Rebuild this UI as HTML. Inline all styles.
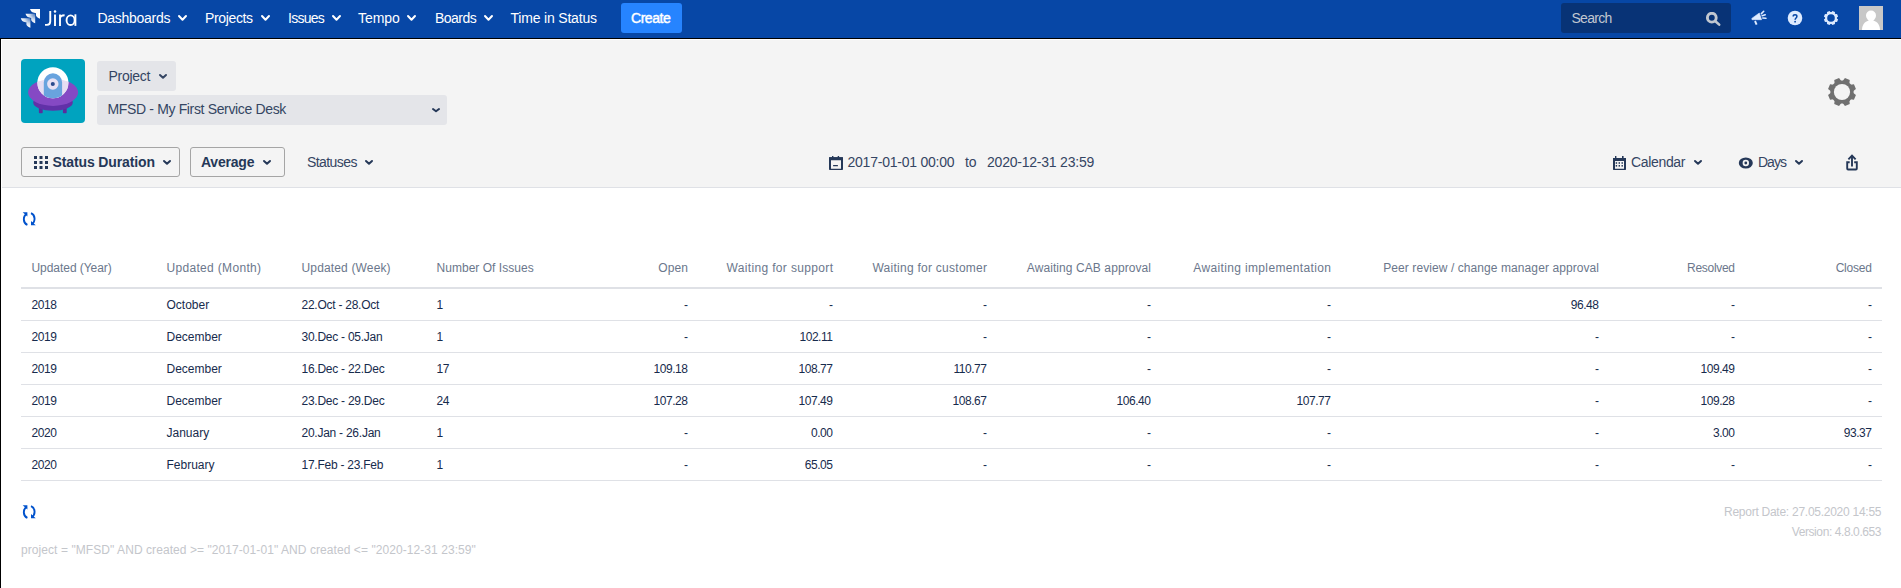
<!DOCTYPE html>
<html><head><meta charset="utf-8">
<style>
html,body{margin:0;padding:0;}
body{width:1901px;height:588px;overflow:hidden;position:relative;background:#fff;font-family:"Liberation Sans",sans-serif;}
.a{position:absolute;white-space:nowrap;}
</style></head><body>
<div class="a" style="left:0;top:0;width:1901px;height:38px;background:#0747A6;"></div>
<svg class="a" style="left:18px;top:6px" width="26" height="24" viewBox="0 0 26 24">
  <defs>
   <radialGradient id="lg1" gradientUnits="userSpaceOnUse" cx="17" cy="8" r="9"><stop offset="0" stop-color="#fff" stop-opacity="0.25"/><stop offset="0.6" stop-color="#fff" stop-opacity="0.8"/><stop offset="1" stop-color="#fff" stop-opacity="1"/></radialGradient>
   <radialGradient id="lg2" gradientUnits="userSpaceOnUse" cx="12.3" cy="12.2" r="9"><stop offset="0" stop-color="#fff" stop-opacity="0.25"/><stop offset="0.6" stop-color="#fff" stop-opacity="0.8"/><stop offset="1" stop-color="#fff" stop-opacity="1"/></radialGradient>
  </defs>
  <path d="M12 3.1 L22 3.1 L22 12.8 C20.6 12.3 18.2 11 18 9.5 L18 7.2 C15.5 7 13 6.3 12 3.1 Z" fill="#fff"/>
  <path d="M7.5 7.8 L17.2 7.8 L17.2 17.2 C15.8 16.7 13.4 15.4 13.2 13.9 L13.2 11.9 C10.9 11.7 8.5 11 7.5 7.8 Z" fill="url(#lg1)"/>
  <path d="M2.8 12.2 L12.4 12.2 L12.4 21.7 C11 21.2 8.6 19.9 8.4 18.4 L8.4 16.3 C6.1 16.1 3.8 15.4 2.8 12.2 Z" fill="url(#lg2)"/>
</svg>
<svg class="a" style="left:40px;top:6px" width="40" height="24" viewBox="40 6 40 24">
 <g stroke="#fff" stroke-width="1.9" fill="none">
  <path d="M50.25 10.9 L50.25 21.6 Q50.25 24.85 47 24.85 L45 24.85"/>
  <path d="M55 14.4 L55 25.9"/>
  <path d="M60 14.4 L60 25.9 M60 18.4 Q60.3 15.3 64.6 15.3"/>
  <ellipse cx="70.6" cy="20.2" rx="4.05" ry="4.85"/>
  <path d="M75.4 14.3 L75.4 25.9"/>
 </g>
 <circle cx="55" cy="11.5" r="1.25" fill="#fff"/>
</svg>
<div class="a" style="left:97.5px;top:10.0px;font-size:14px;line-height:16px;color:#fff;letter-spacing:-0.28px;">Dashboards</div>
<svg class="a" style="left:176px;top:13px" width="13" height="10" viewBox="0 0 13 10"><path d="M3.0 3.0 L6.5 6.8 L10.0 3.0" stroke="#fff" stroke-width="2" fill="none" stroke-linecap="round" stroke-linejoin="round"/></svg>
<div class="a" style="left:205px;top:10.0px;font-size:14px;line-height:16px;color:#fff;letter-spacing:-0.36px;">Projects</div>
<svg class="a" style="left:259px;top:13px" width="13" height="10" viewBox="0 0 13 10"><path d="M3.0 3.0 L6.5 6.8 L10.0 3.0" stroke="#fff" stroke-width="2" fill="none" stroke-linecap="round" stroke-linejoin="round"/></svg>
<div class="a" style="left:288px;top:10.0px;font-size:14px;line-height:16px;color:#fff;letter-spacing:-0.74px;">Issues</div>
<svg class="a" style="left:330px;top:13px" width="13" height="10" viewBox="0 0 13 10"><path d="M3.0 3.0 L6.5 6.8 L10.0 3.0" stroke="#fff" stroke-width="2" fill="none" stroke-linecap="round" stroke-linejoin="round"/></svg>
<div class="a" style="left:358px;top:10.0px;font-size:14px;line-height:16px;color:#fff;letter-spacing:-0.08px;">Tempo</div>
<svg class="a" style="left:405px;top:13px" width="13" height="10" viewBox="0 0 13 10"><path d="M3.0 3.0 L6.5 6.8 L10.0 3.0" stroke="#fff" stroke-width="2" fill="none" stroke-linecap="round" stroke-linejoin="round"/></svg>
<div class="a" style="left:435px;top:10.0px;font-size:14px;line-height:16px;color:#fff;letter-spacing:-0.54px;">Boards</div>
<svg class="a" style="left:482px;top:13px" width="13" height="10" viewBox="0 0 13 10"><path d="M3.0 3.0 L6.5 6.8 L10.0 3.0" stroke="#fff" stroke-width="2" fill="none" stroke-linecap="round" stroke-linejoin="round"/></svg>
<div class="a" style="left:510.5px;top:10.0px;font-size:14px;line-height:16px;color:#fff;letter-spacing:-0.19px;">Time in Status</div>
<div class="a" style="left:621px;top:3px;width:61px;height:30px;background:#2684FF;border-radius:3px;"></div>
<div class="a" style="left:631px;top:10.0px;font-size:14px;line-height:16px;color:#fff;letter-spacing:-0.45px;-webkit-text-stroke:0.45px #fff;">Create</div>
<div class="a" style="left:1561px;top:3px;width:170px;height:30px;background:#083376;border-radius:3px;"></div>
<div class="a" style="left:1571.5px;top:10.0px;font-size:14px;line-height:16px;color:#C1C7D0;letter-spacing:-0.72px;">Search</div>
<svg class="a" style="left:1705px;top:12px" width="17" height="15" viewBox="0 0 17 15"><circle cx="6.8" cy="5.7" r="4.4" stroke="#C1C7D0" stroke-width="2.9" fill="none"/><path d="M10.4 9.2 L14.2 12.6" stroke="#C1C7D0" stroke-width="2.6" stroke-linecap="round"/></svg>
<svg class="a" style="left:1750px;top:10px" width="18" height="16" viewBox="0 0 18 16">
  <path d="M1.8 8.4 L9.3 3 L11.6 9.7 L2 9.7 Z" fill="#DEEBFF" stroke="#DEEBFF" stroke-width="0.6" stroke-linejoin="round"/>
  <path d="M5 11 L6.6 14.7" stroke="#DEEBFF" stroke-width="1.9" stroke-linecap="butt"/>
  <path d="M11.4 3.6 L13.7 1.3 M12.2 5.7 L15.2 4.8 M12.8 8 L15.9 8.3" stroke="#DEEBFF" stroke-width="1.6" stroke-linecap="round"/>
</svg>
<svg class="a" style="left:1787px;top:10px" width="16" height="16" viewBox="0 0 16 16">
  <circle cx="8" cy="8" r="7.3" fill="#DEEBFF"/>
  <path d="M6.2 6.4 C6.2 4.2 9.9 4.2 9.9 6.4 C9.9 8 8.1 8 8.1 9.8" stroke="#0747A6" stroke-width="1.5" fill="none"/>
  <circle cx="8.1" cy="11.7" r="0.9" fill="#0747A6"/>
</svg>
<svg class="a" style="left:1823px;top:10px" width="16" height="16" viewBox="0 0 16 16">
  <circle cx="8" cy="8" r="5.9" fill="#DEEBFF"/>
  <path d="M8.23 2.47 L9.42 0.90 L12.01 1.98 L11.75 3.92 L12.08 4.25 L14.02 3.99 L15.10 6.58 L13.53 7.77 L13.53 8.23 L15.10 9.42 L14.02 12.01 L12.08 11.75 L11.75 12.08 L12.01 14.02 L9.42 15.10 L8.23 13.53 L7.77 13.53 L6.58 15.10 L3.99 14.02 L4.25 12.08 L3.92 11.75 L1.98 12.01 L0.90 9.42 L2.47 8.23 L2.47 7.77 L0.90 6.58 L1.98 3.99 L3.92 4.25 L4.25 3.92 L3.99 1.98 L6.58 0.90 L7.77 2.47 Z" fill="#DEEBFF"/>
  <circle cx="8" cy="8" r="3.8" fill="#0747A6"/>
</svg>
<div class="a" style="left:1859px;top:6px;width:24px;height:24px;background:#C8C8C8;overflow:hidden;">
  <svg width="24" height="24" viewBox="0 0 24 24"><circle cx="12" cy="9.6" r="5" fill="#fff"/><path d="M3 24 C3 18 7 14.3 12 14.3 C17 14.3 21 18 21 24 Z" fill="#fff"/><rect x="9.5" y="13" width="5" height="3" fill="#fff"/></svg>
</div>
<div class="a" style="left:0;top:38px;width:1901px;height:1px;background:#000;"></div>
<div class="a" style="left:1px;top:39px;width:1900px;height:1px;background:#fff;"></div>
<div class="a" style="left:0;top:38px;width:1px;height:550px;background:#000;"></div>
<div class="a" style="left:1px;top:39px;width:1px;height:549px;background:#fff;"></div>
<div class="a" style="left:2px;top:40px;width:1899px;height:147px;background:#F4F4F4;border-bottom:1px solid #DFE1E6;"></div>
<div class="a" style="left:21px;top:59px;width:64px;height:64px;background:#00A3BF;border-radius:4px;overflow:hidden;">
<svg width="64" height="64" viewBox="0 0 64 64">
  <defs><clipPath id="sc"><ellipse cx="32.1" cy="33.4" rx="25" ry="13.5"/></clipPath><clipPath id="dc"><circle cx="31.9" cy="23.7" r="15.5"/></clipPath></defs>
  <rect x="17.9" y="45" width="3.8" height="9.3" rx="0.8" fill="#5A2D9E"/>
  <rect x="41.9" y="45" width="3.8" height="9.3" rx="0.8" fill="#5A2D9E"/>
  <ellipse cx="32" cy="43.6" rx="19.8" ry="8.2" fill="#6131A8"/>
  <ellipse cx="32.1" cy="33.4" rx="25" ry="13.5" fill="#8549C4"/>
  <circle cx="31.9" cy="23.7" r="15.5" fill="#fff"/>
  <circle cx="31.9" cy="23.7" r="15.5" fill="#E6DDF2" clip-path="url(#sc)"/>
  <path d="M22.8 45 L22.8 23.4 A9.15 9.15 0 0 1 41.1 23.4 L41.1 45 Z" fill="#69A3DE" clip-path="url(#dc)"/>
  <circle cx="31.8" cy="25" r="5.7" fill="#E8E1F4"/>
  <circle cx="31.8" cy="25" r="2.05" fill="#2B4B8E"/>
</svg>
</div>
<div class="a" style="left:97px;top:61px;width:79px;height:30px;background:#E4E5E9;border-radius:3px;"></div>
<div class="a" style="left:108.5px;top:68.0px;font-size:14px;line-height:16px;color:#344563;letter-spacing:-0.3px;">Project</div>
<svg class="a" style="left:157px;top:71.5px" width="12" height="9" viewBox="0 0 12 9"><path d="M3.0 3.0 L6.0 5.8 L9.0 3.0" stroke="#344563" stroke-width="2" fill="none" stroke-linecap="round" stroke-linejoin="round"/></svg>
<div class="a" style="left:97px;top:95px;width:350px;height:30px;background:#E4E5E9;border-radius:3px;"></div>
<div class="a" style="left:107.5px;top:101.0px;font-size:14px;line-height:16px;color:#344563;letter-spacing:-0.35px;">MFSD - My First Service Desk</div>
<svg class="a" style="left:430px;top:105.5px" width="12" height="8.5" viewBox="0 0 12 8.5"><path d="M3.0 3.0 L6.0 5.3 L9.0 3.0" stroke="#253858" stroke-width="2" fill="none" stroke-linecap="round" stroke-linejoin="round"/></svg>
<svg class="a" style="left:1826px;top:76px" width="32" height="32" viewBox="0 0 32 32">
  <circle cx="16" cy="16" r="11.6" fill="#707070"/>
  <path d="M16.69 4.92 L18.96 2.07 L23.76 4.06 L23.34 7.68 L24.32 8.66 L27.94 8.24 L29.93 13.04 L27.08 15.31 L27.08 16.69 L29.93 18.96 L27.94 23.76 L24.32 23.34 L23.34 24.32 L23.76 27.94 L18.96 29.93 L16.69 27.08 L15.31 27.08 L13.04 29.93 L8.24 27.94 L8.66 24.32 L7.68 23.34 L4.06 23.76 L2.07 18.96 L4.92 16.69 L4.92 15.31 L2.07 13.04 L4.06 8.24 L7.68 8.66 L8.66 7.68 L8.24 4.06 L13.04 2.07 L15.31 4.92 Z" fill="#707070"/>
  <circle cx="16" cy="16" r="8.1" fill="#F4F4F4"/>
</svg>
<div class="a" style="left:21px;top:147px;width:159px;height:30px;box-sizing:border-box;border:1px solid #A5A5A5;border-radius:3px;"></div>
<svg class="a" style="left:34px;top:156px" width="14" height="13" viewBox="0 0 14 13">
  <g fill="#253858">
  <rect x="0" y="0" width="3" height="3"/><rect x="5.5" y="0" width="3" height="3"/><rect x="11" y="0" width="3" height="3"/>
  <rect x="0" y="5" width="3" height="3"/><rect x="5.5" y="5" width="3" height="3"/><rect x="11" y="5" width="3" height="3"/>
  <rect x="0" y="10" width="3" height="3"/><rect x="5.5" y="10" width="3" height="3"/><rect x="11" y="10" width="3" height="3"/>
  </g>
</svg>
<div class="a" style="left:52.5px;top:154.0px;font-size:14px;line-height:16px;color:#253858;font-weight:bold;letter-spacing:-0.12px;">Status Duration</div>
<svg class="a" style="left:161px;top:157.5px" width="12" height="9" viewBox="0 0 12 9"><path d="M3.0 3.0 L6.0 5.8 L9.0 3.0" stroke="#253858" stroke-width="2" fill="none" stroke-linecap="round" stroke-linejoin="round"/></svg>
<div class="a" style="left:190px;top:147px;width:95px;height:30px;box-sizing:border-box;border:1px solid #A5A5A5;border-radius:3px;"></div>
<div class="a" style="left:201px;top:154.0px;font-size:14px;line-height:16px;color:#253858;font-weight:bold;letter-spacing:-0.22px;">Average</div>
<svg class="a" style="left:260.5px;top:157.5px" width="12" height="9" viewBox="0 0 12 9"><path d="M3.0 3.0 L6.0 5.8 L9.0 3.0" stroke="#253858" stroke-width="2" fill="none" stroke-linecap="round" stroke-linejoin="round"/></svg>
<div class="a" style="left:307px;top:154.0px;font-size:14px;line-height:16px;color:#344563;letter-spacing:-0.57px;">Statuses</div>
<svg class="a" style="left:363px;top:157.5px" width="12" height="9" viewBox="0 0 12 9"><path d="M3.0 3.0 L6.0 5.8 L9.0 3.0" stroke="#253858" stroke-width="2" fill="none" stroke-linecap="round" stroke-linejoin="round"/></svg>
<svg class="a" style="left:829px;top:156px" width="14" height="14" viewBox="0 0 14 14">
  <path d="M1 2.2 L13 2.2 L13 12.4 Q13 13.7 11.7 13.7 L2.3 13.7 Q1 13.7 1 12.4 Z" stroke="#253858" stroke-width="2" fill="none"/>
  <rect x="0" y="1.2" width="14" height="3" rx="0.8" fill="#253858"/>
  <rect x="3" y="0" width="1.4" height="2" fill="#253858"/><rect x="8.7" y="0" width="1.4" height="2" fill="#253858"/>
  <rect x="4" y="9" width="5" height="1.3" rx="0.6" fill="#253858"/>
</svg>
<div class="a" style="left:847.5px;top:154.0px;font-size:14px;line-height:16px;color:#344563;letter-spacing:-0.23px;">2017-01-01 00:00</div>
<div class="a" style="left:965px;top:154.0px;font-size:14px;line-height:16px;color:#344563;letter-spacing:-0.2px;">to</div>
<div class="a" style="left:987px;top:154.0px;font-size:14px;line-height:16px;color:#344563;letter-spacing:-0.22px;">2020-12-31 23:59</div>
<svg class="a" style="left:1613px;top:156px" width="14" height="14" viewBox="0 0 14 14">
  <path d="M1 3 L12 3 L12 12.7 Q12 13.7 11 13.7 L2 13.7 Q1 13.7 1 12.7 Z" stroke="#253858" stroke-width="2" fill="none"/>
  <rect x="0" y="2" width="13" height="3" rx="0.8" fill="#253858"/>
  <rect x="2" y="0" width="1.4" height="2.2" fill="#253858"/><rect x="9" y="0" width="1.6" height="2.2" fill="#253858"/>
  <g fill="#253858"><rect x="2.7" y="6.2" width="1.4" height="1.6"/><rect x="5.6" y="6.2" width="1.4" height="1.6"/><rect x="8.5" y="6.2" width="1.4" height="1.6"/>
  <rect x="2.7" y="9" width="1.4" height="1.6"/><rect x="5.6" y="9" width="1.4" height="1.6"/><rect x="8.5" y="9" width="1.4" height="1.6"/></g>
</svg>
<div class="a" style="left:1631px;top:154.0px;font-size:14px;line-height:16px;color:#344563;letter-spacing:-0.34px;">Calendar</div>
<svg class="a" style="left:1692px;top:158px" width="12" height="9" viewBox="0 0 12 9"><path d="M3.0 3.0 L6.0 5.8 L9.0 3.0" stroke="#253858" stroke-width="2" fill="none" stroke-linecap="round" stroke-linejoin="round"/></svg>
<svg class="a" style="left:1738px;top:156px" width="16" height="14" viewBox="0 0 16 14">
  <ellipse cx="7.8" cy="7" rx="7" ry="5.6" fill="#253858"/>
  <circle cx="7.8" cy="7" r="3.2" fill="#F4F4F4"/><circle cx="7.8" cy="7" r="1.4" fill="#253858"/>
</svg>
<div class="a" style="left:1758px;top:154.0px;font-size:14px;line-height:16px;color:#344563;letter-spacing:-1.0px;">Days</div>
<svg class="a" style="left:1793px;top:158px" width="12" height="9" viewBox="0 0 12 9"><path d="M3.0 3.0 L6.0 5.8 L9.0 3.0" stroke="#253858" stroke-width="2" fill="none" stroke-linecap="round" stroke-linejoin="round"/></svg>
<svg class="a" style="left:1845px;top:154px" width="14" height="17" viewBox="0 0 14 17">
  <path d="M7 2.2 L7 12.6" stroke="#253858" stroke-width="1.9"/>
  <path d="M3.4 5.3 L7 1.6 L10.6 5.3" stroke="#253858" stroke-width="1.9" fill="none"/>
  <path d="M4.7 8.2 L2.2 8.2 L2.2 14.6 Q2.2 15.5 3.1 15.5 L10.9 15.5 Q11.8 15.5 11.8 14.6 L11.8 8.2 L9.2 8.2" stroke="#253858" stroke-width="1.9" fill="none"/>
</svg>
<svg class="a" style="left:22px;top:212px" width="15" height="15" viewBox="0 0 15 15"><g stroke="#0052CC" stroke-width="1.9" fill="none"><path d="M4.8 1.8 A5.2 6 0 0 0 5.4 12.9"/><path d="M9 1.1 A5.2 6 0 0 1 9.6 12.2"/></g><path d="M0.7 0.3 L5.4 0.3 L5.4 4.6 Z" fill="#0052CC"/><path d="M9 9 L9 13.3 L13.7 13.3 Z" fill="#0052CC"/></svg>
<div class="a" style="left:31.5px;top:261.0px;font-size:12px;line-height:14px;color:#6B778C;letter-spacing:-0.05px;">Updated (Year)</div>
<div class="a" style="left:166.5px;top:261.0px;font-size:12px;line-height:14px;color:#6B778C;letter-spacing:0.32px;">Updated (Month)</div>
<div class="a" style="left:301.5px;top:261.0px;font-size:12px;line-height:14px;color:#6B778C;letter-spacing:0.15px;">Updated (Week)</div>
<div class="a" style="left:436.5px;top:261.0px;font-size:12px;line-height:14px;color:#6B778C;letter-spacing:0.03px;">Number Of Issues</div>
<div class="a" style="right:1212.9px;top:261.0px;font-size:12px;line-height:14px;color:#6B778C;letter-spacing:0.1px;">Open</div>
<div class="a" style="right:1067.65px;top:261.0px;font-size:12px;line-height:14px;color:#6B778C;letter-spacing:0.35px;">Waiting for support</div>
<div class="a" style="right:913.74px;top:261.0px;font-size:12px;line-height:14px;color:#6B778C;letter-spacing:0.26px;">Waiting for customer</div>
<div class="a" style="right:749.915px;top:261.0px;font-size:12px;line-height:14px;color:#6B778C;letter-spacing:0.085px;">Awaiting CAB approval</div>
<div class="a" style="right:569.64px;top:261.0px;font-size:12px;line-height:14px;color:#6B778C;letter-spacing:0.36px;">Awaiting implementation</div>
<div class="a" style="right:301.917px;top:261.0px;font-size:12px;line-height:14px;color:#6B778C;letter-spacing:0.083px;">Peer review / change manager approval</div>
<div class="a" style="right:166.3px;top:261.0px;font-size:12px;line-height:14px;color:#6B778C;letter-spacing:-0.3px;">Resolved</div>
<div class="a" style="right:29.2px;top:261.0px;font-size:12px;line-height:14px;color:#6B778C;letter-spacing:-0.2px;">Closed</div>
<div class="a" style="left:21px;top:287px;width:1861px;height:2px;background:#DFE1E6;"></div>
<div class="a" style="left:31.5px;top:298.0px;font-size:12px;line-height:14px;color:#172B4D;letter-spacing:-0.45px;">2018</div>
<div class="a" style="left:166.5px;top:298.0px;font-size:12px;line-height:14px;color:#172B4D;letter-spacing:0px;">October</div>
<div class="a" style="left:301.5px;top:298.0px;font-size:12px;line-height:14px;color:#172B4D;letter-spacing:-0.25px;">22.Oct - 28.Oct</div>
<div class="a" style="left:436.5px;top:298.0px;font-size:12px;line-height:14px;color:#172B4D;letter-spacing:-0.45px;">1</div>
<div class="a" style="right:1213px;top:298.0px;font-size:12px;line-height:14px;color:#172B4D;letter-spacing:0px;">-</div>
<div class="a" style="right:1068px;top:298.0px;font-size:12px;line-height:14px;color:#172B4D;letter-spacing:0px;">-</div>
<div class="a" style="right:914px;top:298.0px;font-size:12px;line-height:14px;color:#172B4D;letter-spacing:0px;">-</div>
<div class="a" style="right:750px;top:298.0px;font-size:12px;line-height:14px;color:#172B4D;letter-spacing:0px;">-</div>
<div class="a" style="right:570px;top:298.0px;font-size:12px;line-height:14px;color:#172B4D;letter-spacing:0px;">-</div>
<div class="a" style="right:302.45px;top:298.0px;font-size:12px;line-height:14px;color:#172B4D;letter-spacing:-0.45px;">96.48</div>
<div class="a" style="right:166px;top:298.0px;font-size:12px;line-height:14px;color:#172B4D;letter-spacing:0px;">-</div>
<div class="a" style="right:29px;top:298.0px;font-size:12px;line-height:14px;color:#172B4D;letter-spacing:0px;">-</div>
<div class="a" style="left:21px;top:320px;width:1861px;height:1px;background:#DFE1E6;"></div>
<div class="a" style="left:31.5px;top:330.0px;font-size:12px;line-height:14px;color:#172B4D;letter-spacing:-0.45px;">2019</div>
<div class="a" style="left:166.5px;top:330.0px;font-size:12px;line-height:14px;color:#172B4D;letter-spacing:0px;">December</div>
<div class="a" style="left:301.5px;top:330.0px;font-size:12px;line-height:14px;color:#172B4D;letter-spacing:-0.25px;">30.Dec - 05.Jan</div>
<div class="a" style="left:436.5px;top:330.0px;font-size:12px;line-height:14px;color:#172B4D;letter-spacing:-0.45px;">1</div>
<div class="a" style="right:1213px;top:330.0px;font-size:12px;line-height:14px;color:#172B4D;letter-spacing:0px;">-</div>
<div class="a" style="right:1068.45px;top:330.0px;font-size:12px;line-height:14px;color:#172B4D;letter-spacing:-0.45px;">102.11</div>
<div class="a" style="right:914px;top:330.0px;font-size:12px;line-height:14px;color:#172B4D;letter-spacing:0px;">-</div>
<div class="a" style="right:750px;top:330.0px;font-size:12px;line-height:14px;color:#172B4D;letter-spacing:0px;">-</div>
<div class="a" style="right:570px;top:330.0px;font-size:12px;line-height:14px;color:#172B4D;letter-spacing:0px;">-</div>
<div class="a" style="right:302px;top:330.0px;font-size:12px;line-height:14px;color:#172B4D;letter-spacing:0px;">-</div>
<div class="a" style="right:166px;top:330.0px;font-size:12px;line-height:14px;color:#172B4D;letter-spacing:0px;">-</div>
<div class="a" style="right:29px;top:330.0px;font-size:12px;line-height:14px;color:#172B4D;letter-spacing:0px;">-</div>
<div class="a" style="left:21px;top:352px;width:1861px;height:1px;background:#DFE1E6;"></div>
<div class="a" style="left:31.5px;top:362.0px;font-size:12px;line-height:14px;color:#172B4D;letter-spacing:-0.45px;">2019</div>
<div class="a" style="left:166.5px;top:362.0px;font-size:12px;line-height:14px;color:#172B4D;letter-spacing:0px;">December</div>
<div class="a" style="left:301.5px;top:362.0px;font-size:12px;line-height:14px;color:#172B4D;letter-spacing:-0.25px;">16.Dec - 22.Dec</div>
<div class="a" style="left:436.5px;top:362.0px;font-size:12px;line-height:14px;color:#172B4D;letter-spacing:-0.45px;">17</div>
<div class="a" style="right:1213.45px;top:362.0px;font-size:12px;line-height:14px;color:#172B4D;letter-spacing:-0.45px;">109.18</div>
<div class="a" style="right:1068.45px;top:362.0px;font-size:12px;line-height:14px;color:#172B4D;letter-spacing:-0.45px;">108.77</div>
<div class="a" style="right:914.45px;top:362.0px;font-size:12px;line-height:14px;color:#172B4D;letter-spacing:-0.45px;">110.77</div>
<div class="a" style="right:750px;top:362.0px;font-size:12px;line-height:14px;color:#172B4D;letter-spacing:0px;">-</div>
<div class="a" style="right:570px;top:362.0px;font-size:12px;line-height:14px;color:#172B4D;letter-spacing:0px;">-</div>
<div class="a" style="right:302px;top:362.0px;font-size:12px;line-height:14px;color:#172B4D;letter-spacing:0px;">-</div>
<div class="a" style="right:166.45px;top:362.0px;font-size:12px;line-height:14px;color:#172B4D;letter-spacing:-0.45px;">109.49</div>
<div class="a" style="right:29px;top:362.0px;font-size:12px;line-height:14px;color:#172B4D;letter-spacing:0px;">-</div>
<div class="a" style="left:21px;top:384px;width:1861px;height:1px;background:#DFE1E6;"></div>
<div class="a" style="left:31.5px;top:394.0px;font-size:12px;line-height:14px;color:#172B4D;letter-spacing:-0.45px;">2019</div>
<div class="a" style="left:166.5px;top:394.0px;font-size:12px;line-height:14px;color:#172B4D;letter-spacing:0px;">December</div>
<div class="a" style="left:301.5px;top:394.0px;font-size:12px;line-height:14px;color:#172B4D;letter-spacing:-0.25px;">23.Dec - 29.Dec</div>
<div class="a" style="left:436.5px;top:394.0px;font-size:12px;line-height:14px;color:#172B4D;letter-spacing:-0.45px;">24</div>
<div class="a" style="right:1213.45px;top:394.0px;font-size:12px;line-height:14px;color:#172B4D;letter-spacing:-0.45px;">107.28</div>
<div class="a" style="right:1068.45px;top:394.0px;font-size:12px;line-height:14px;color:#172B4D;letter-spacing:-0.45px;">107.49</div>
<div class="a" style="right:914.45px;top:394.0px;font-size:12px;line-height:14px;color:#172B4D;letter-spacing:-0.45px;">108.67</div>
<div class="a" style="right:750.45px;top:394.0px;font-size:12px;line-height:14px;color:#172B4D;letter-spacing:-0.45px;">106.40</div>
<div class="a" style="right:570.45px;top:394.0px;font-size:12px;line-height:14px;color:#172B4D;letter-spacing:-0.45px;">107.77</div>
<div class="a" style="right:302px;top:394.0px;font-size:12px;line-height:14px;color:#172B4D;letter-spacing:0px;">-</div>
<div class="a" style="right:166.45px;top:394.0px;font-size:12px;line-height:14px;color:#172B4D;letter-spacing:-0.45px;">109.28</div>
<div class="a" style="right:29px;top:394.0px;font-size:12px;line-height:14px;color:#172B4D;letter-spacing:0px;">-</div>
<div class="a" style="left:21px;top:416px;width:1861px;height:1px;background:#DFE1E6;"></div>
<div class="a" style="left:31.5px;top:426.0px;font-size:12px;line-height:14px;color:#172B4D;letter-spacing:-0.45px;">2020</div>
<div class="a" style="left:166.5px;top:426.0px;font-size:12px;line-height:14px;color:#172B4D;letter-spacing:0px;">January</div>
<div class="a" style="left:301.5px;top:426.0px;font-size:12px;line-height:14px;color:#172B4D;letter-spacing:-0.25px;">20.Jan - 26.Jan</div>
<div class="a" style="left:436.5px;top:426.0px;font-size:12px;line-height:14px;color:#172B4D;letter-spacing:-0.45px;">1</div>
<div class="a" style="right:1213px;top:426.0px;font-size:12px;line-height:14px;color:#172B4D;letter-spacing:0px;">-</div>
<div class="a" style="right:1068.45px;top:426.0px;font-size:12px;line-height:14px;color:#172B4D;letter-spacing:-0.45px;">0.00</div>
<div class="a" style="right:914px;top:426.0px;font-size:12px;line-height:14px;color:#172B4D;letter-spacing:0px;">-</div>
<div class="a" style="right:750px;top:426.0px;font-size:12px;line-height:14px;color:#172B4D;letter-spacing:0px;">-</div>
<div class="a" style="right:570px;top:426.0px;font-size:12px;line-height:14px;color:#172B4D;letter-spacing:0px;">-</div>
<div class="a" style="right:302px;top:426.0px;font-size:12px;line-height:14px;color:#172B4D;letter-spacing:0px;">-</div>
<div class="a" style="right:166.45px;top:426.0px;font-size:12px;line-height:14px;color:#172B4D;letter-spacing:-0.45px;">3.00</div>
<div class="a" style="right:29.45px;top:426.0px;font-size:12px;line-height:14px;color:#172B4D;letter-spacing:-0.45px;">93.37</div>
<div class="a" style="left:21px;top:448px;width:1861px;height:1px;background:#DFE1E6;"></div>
<div class="a" style="left:31.5px;top:458.0px;font-size:12px;line-height:14px;color:#172B4D;letter-spacing:-0.45px;">2020</div>
<div class="a" style="left:166.5px;top:458.0px;font-size:12px;line-height:14px;color:#172B4D;letter-spacing:0px;">February</div>
<div class="a" style="left:301.5px;top:458.0px;font-size:12px;line-height:14px;color:#172B4D;letter-spacing:-0.25px;">17.Feb - 23.Feb</div>
<div class="a" style="left:436.5px;top:458.0px;font-size:12px;line-height:14px;color:#172B4D;letter-spacing:-0.45px;">1</div>
<div class="a" style="right:1213px;top:458.0px;font-size:12px;line-height:14px;color:#172B4D;letter-spacing:0px;">-</div>
<div class="a" style="right:1068.45px;top:458.0px;font-size:12px;line-height:14px;color:#172B4D;letter-spacing:-0.45px;">65.05</div>
<div class="a" style="right:914px;top:458.0px;font-size:12px;line-height:14px;color:#172B4D;letter-spacing:0px;">-</div>
<div class="a" style="right:750px;top:458.0px;font-size:12px;line-height:14px;color:#172B4D;letter-spacing:0px;">-</div>
<div class="a" style="right:570px;top:458.0px;font-size:12px;line-height:14px;color:#172B4D;letter-spacing:0px;">-</div>
<div class="a" style="right:302px;top:458.0px;font-size:12px;line-height:14px;color:#172B4D;letter-spacing:0px;">-</div>
<div class="a" style="right:166px;top:458.0px;font-size:12px;line-height:14px;color:#172B4D;letter-spacing:0px;">-</div>
<div class="a" style="right:29px;top:458.0px;font-size:12px;line-height:14px;color:#172B4D;letter-spacing:0px;">-</div>
<div class="a" style="left:21px;top:480px;width:1861px;height:1px;background:#DFE1E6;"></div>
<svg class="a" style="left:22px;top:505px" width="15" height="15" viewBox="0 0 15 15"><g stroke="#0052CC" stroke-width="1.9" fill="none"><path d="M4.8 1.8 A5.2 6 0 0 0 5.4 12.9"/><path d="M9 1.1 A5.2 6 0 0 1 9.6 12.2"/></g><path d="M0.7 0.3 L5.4 0.3 L5.4 4.6 Z" fill="#0052CC"/><path d="M9 9 L9 13.3 L13.7 13.3 Z" fill="#0052CC"/></svg>
<div class="a" style="left:21px;top:543.0px;font-size:12px;line-height:14px;color:#C4C6CB;letter-spacing:0.07px;">project = "MFSD" AND created &gt;= "2017-01-01" AND created &lt;= "2020-12-31 23:59"</div>
<div class="a" style="right:19.76px;top:504.5px;font-size:12px;line-height:14px;color:#C4C6CB;letter-spacing:-0.26px;">Report Date: 27.05.2020 14:55</div>
<div class="a" style="right:19.91px;top:524.5px;font-size:12px;line-height:14px;color:#C4C6CB;letter-spacing:-0.41px;">Version: 4.8.0.653</div>
</body></html>
